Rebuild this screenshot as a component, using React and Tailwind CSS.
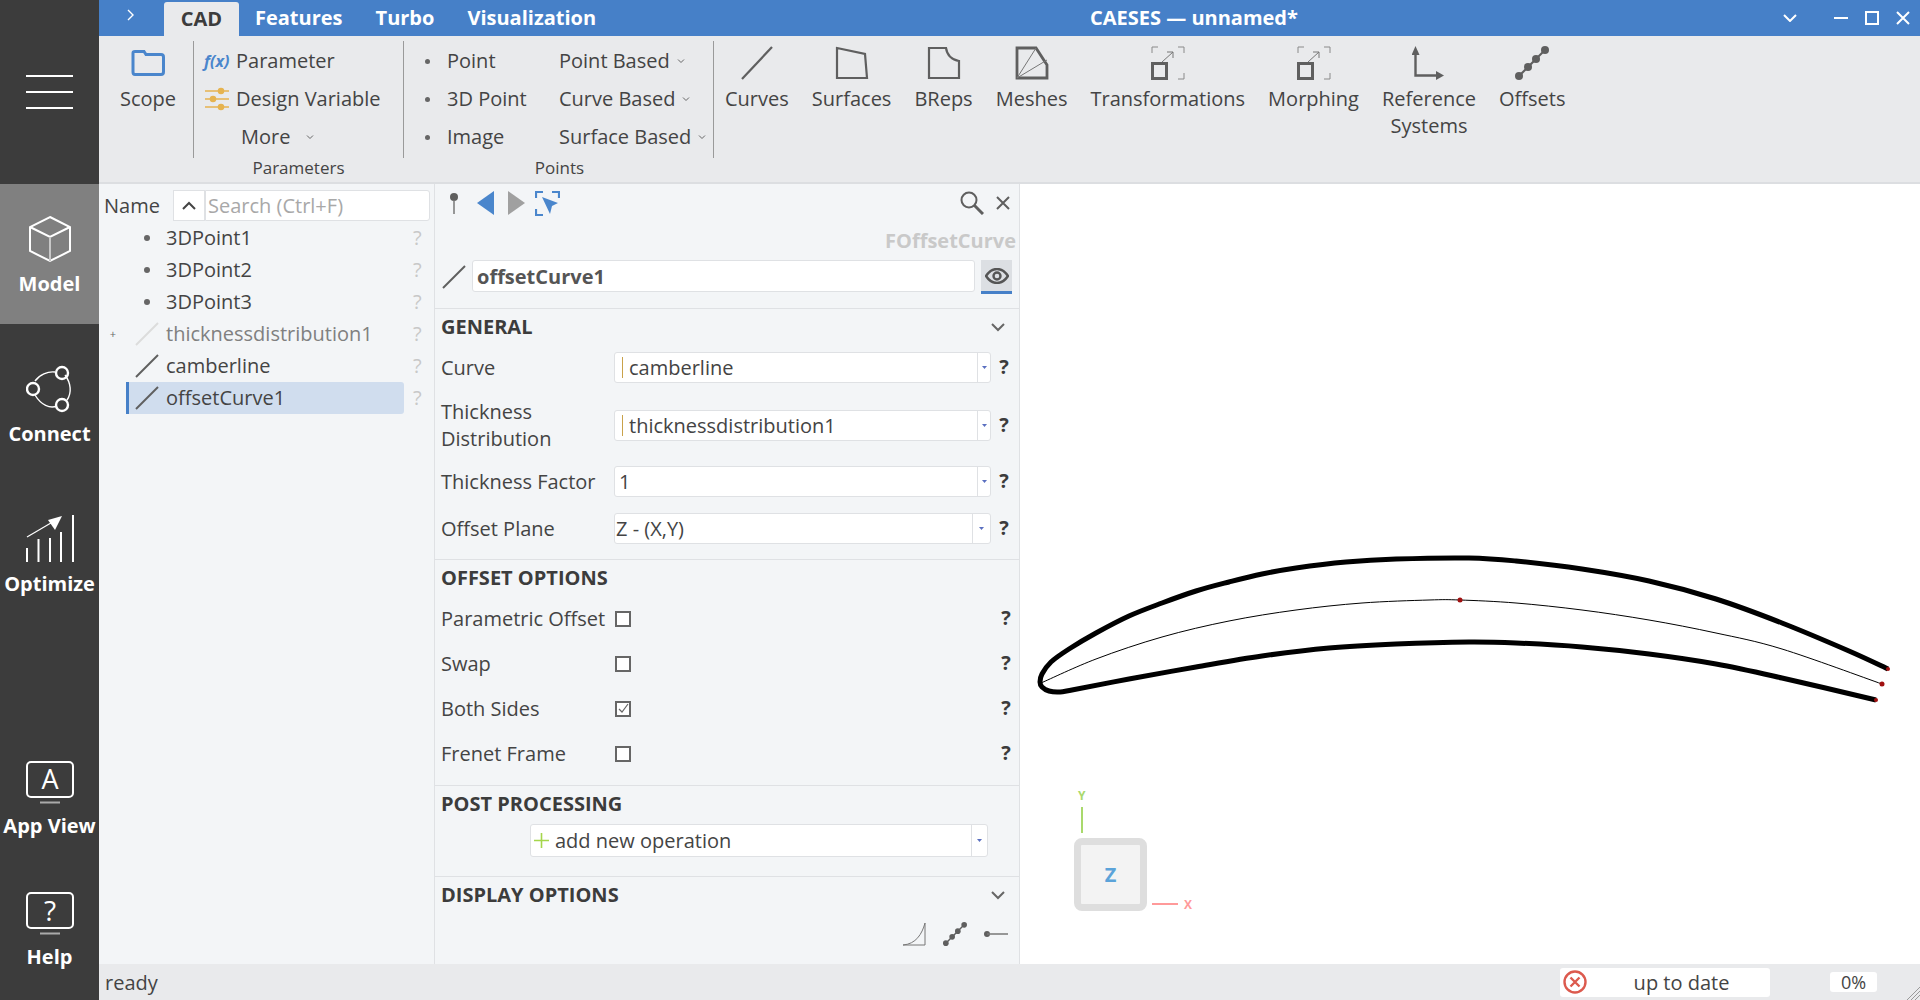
import React from "react";

const upper = [[1889,668],[1850,650],[1783,622],[1717,598],[1650,580],[1583,568],[1517,560],[1470,557],[1397,558],[1347,561],[1297,567],[1263,573],[1230,581],[1197,590],[1163,602],[1130,615],[1097,632],[1070,648],[1052,661],[1043,673],[1041,681],[1043,686],[1050,690],[1060,691],[1073,689],[1130,678],[1197,666],[1263,655],[1330,647],[1397,643],[1470,641],[1517,642],[1583,646],[1650,653],[1717,663],[1783,677],[1877,699]];
const camber = [[1042,682],[1097,658],[1163,636],[1230,620],[1297,609],[1363,602],[1430,599],[1461,599],[1517,602],[1583,609],[1650,619],[1717,632],[1783,648],[1883,683]];

// catmull-rom through the traced points
function smooth(pts) {
  let d = `M${pts[0][0]} ${pts[0][1]}`;
  for (let i = 0; i < pts.length - 1; i++) {
    const a = pts[i - 1] || pts[i];
    const b = pts[i];
    const c = pts[i + 1];
    const e = pts[i + 2] || c;
    d += ` C${b[0] + (c[0] - a[0]) / 6} ${b[1] + (c[1] - a[1]) / 6} ${c[0] - (e[0] - b[0]) / 6} ${c[1] - (e[1] - b[1]) / 6} ${c[0]} ${c[1]}`;
  }
  return d;
}

function LineIcon({ color = "#5f5f5f" }) {
  return (
    <svg width="24" height="24" viewBox="0 0 24 24">
      <line x1="1" y1="23" x2="23" y2="1" stroke={color} strokeWidth="2" />
    </svg>
  );
}

function Caret() {
  return (
    <svg width="8" height="6" viewBox="0 0 8 6" className="ml-[7px]">
      <path d="M1 1.500 L4 4.500 L7 1.500" fill="none" stroke="#666" strokeWidth="1" />
    </svg>
  );
}

function TransformIcon() {
  return (
    <svg width="34" height="34" viewBox="0 0 34 34" fill="none">
      <path d="M1 7V1H7M27 1H33V7M33 27V33H27" stroke="#8a8a8a" strokeWidth="1" />
      <rect x="1.500" y="17.500" width="14" height="15" stroke="#5f5f5f" strokeWidth="3" />
      <path d="M11 16L22 6M16 6H22V12" stroke="#777" strokeWidth="1" />
    </svg>
  );
}

function OffsetsIcon({ size = 34 }) {
  return (
    <svg width={size} height={size} viewBox="0 0 34 34" fill="none">
      <path d="M4 30L30 4" stroke="#5f5f5f" strokeWidth="2" />
      <circle cx="4" cy="30" r="4" fill="#5f5f5f" />
      <circle cx="13" cy="21" r="4" fill="#5f5f5f" />
      <circle cx="21" cy="13" r="4" fill="#5f5f5f" />
      <circle cx="30" cy="4" r="4" fill="#5f5f5f" />
    </svg>
  );
}

const bigButtons = [
  {
    label: ["Curves"],
    icon: (
      <svg width="34" height="34" viewBox="0 0 34 34">
        <line x1="2" y1="33" x2="32" y2="1" stroke="#5f5f5f" strokeWidth="2.2" />
      </svg>
    ),
  },
  {
    label: ["Surfaces"],
    icon: (
      <svg width="34" height="34" viewBox="0 0 34 34" fill="none">
        <path d="M2 2L30 8L32 32H2Z" stroke="#5f5f5f" strokeWidth="2.2" />
      </svg>
    ),
  },
  {
    label: ["BReps"],
    icon: (
      <svg width="34" height="34" viewBox="0 0 34 34" fill="none">
        <path d="M2 2H19C20 9 25 14 32 15V32H2Z" stroke="#5f5f5f" strokeWidth="2.2" />
      </svg>
    ),
  },
  {
    label: ["Meshes"],
    icon: (
      <svg width="34" height="34" viewBox="0 0 34 34" fill="none">
        <path d="M2 2H21L32 19V32H2Z" stroke="#5f5f5f" strokeWidth="2.8" />
        <path d="M2 32L21 2M2 32L32 14" stroke="#777" strokeWidth="1" />
      </svg>
    ),
  },
  { label: ["Transformations"], icon: <TransformIcon /> },
  { label: ["Morphing"], icon: <TransformIcon /> },
  {
    label: ["Reference", "Systems"],
    icon: (
      <svg width="34" height="34" viewBox="0 0 34 34" fill="#5f5f5f">
        <path d="M3.500 8V29.500H27" fill="none" stroke="#5f5f5f" strokeWidth="2.4" />
        <path d="M3.500 0L7.500 9H-0.500Z" />
        <path d="M32 29.500L24 25V34Z" />
      </svg>
    ),
  },
  { label: ["Offsets"], icon: <OffsetsIcon /> },
];

function SideItem({ label, icon, className }) {
  return (
    <div className={`flex flex-col items-center ${className}`}>
      {icon}
      <span className="text-white font-bold text-[20px] leading-[26px] whitespace-nowrap mt-[8px]">{label}</span>
    </div>
  );
}

function Sidebar() {
  return (
    <div className="w-[99px] h-full shrink-0 bg-[#3c3c3c] flex flex-col">
      <div className="h-[184px] shrink-0 flex flex-col gap-[14px] px-[26px] pt-[75px]">
        <div className="h-[2px] bg-white" />
        <div className="h-[2px] bg-white" />
        <div className="h-[2px] bg-white" />
      </div>
      <SideItem
        className="h-[140px] bg-[#808080] pt-[31px]"
        label="Model"
        icon={
          <svg width="44" height="48" viewBox="0 0 44 48" fill="none" stroke="#fff" strokeWidth="2">
            <path d="M22 2L42 12V36L22 46L2 36V12Z" />
            <path d="M2 12L22 22L42 12" />
            <path d="M22 22V46" stroke="#c8c8c8" />
          </svg>
        }
      />
      <SideItem
        className="pt-[41px]"
        label="Connect"
        icon={
          <svg width="48" height="48" viewBox="0 0 48 48" fill="none" stroke="#fff" strokeWidth="2">
            <path d="M9 16C13 10 22 6 29 7M39 10C45 18 46 28 41 35M31 41C24 44 15 40 9 30" strokeWidth="1.4" />
            <circle cx="36" cy="8" r="6" strokeWidth="2.4" />
            <circle cx="7" cy="24" r="6" strokeWidth="2.4" />
            <circle cx="36" cy="40" r="6" strokeWidth="2.4" />
          </svg>
        }
      />
      <SideItem
        className="pt-[68px]"
        label="Optimize"
        icon={
          <svg width="48" height="48" viewBox="0 0 48 48" fill="none" stroke="#fff" strokeWidth="2">
            <path d="M1 22L30 5" strokeWidth="1.2" />
            <path d="M36 1L22 5L29 15Z" fill="#fff" stroke="none" />
            <path d="M47 0V47M35 17V47M24 23V47M12.500 24V47M1 33V47" />
          </svg>
        }
      />
      <div className="flex-1" />
      <SideItem
        label="App View"
        icon={
          <svg width="48" height="44" viewBox="0 0 48 44" fill="none" stroke="#fff" strokeWidth="2">
            <rect x="1" y="1" width="46" height="35" rx="4" />
            <path d="M14 41.500H34" stroke="#aaa" strokeWidth="2" />
            <text x="24" y="28" textAnchor="middle" fontSize="27" fill="#fff" stroke="none">A</text>
          </svg>
        }
      />
      <SideItem
        className="mt-[53px] pb-[30px]"
        label="Help"
        icon={
          <svg width="48" height="44" viewBox="0 0 48 44" fill="none" stroke="#fff" strokeWidth="2">
            <rect x="1" y="1" width="46" height="35" rx="4" />
            <path d="M14 41.500H34" stroke="#aaa" strokeWidth="2" />
            <text x="24" y="29" textAnchor="middle" fontSize="28" fill="#fff" stroke="none">?</text>
          </svg>
        }
      />
    </div>
  );
}

function TopBar() {
  return (
    <div className="h-9 shrink-0 bg-[#4680c8] relative flex items-end text-white font-bold text-[20px]">
      <svg width="8" height="12" viewBox="0 0 8 12" fill="none" className="ml-[28px] mb-[15px] mr-[29px]">
        <path d="M1 1L6 6L1 11" stroke="#fff" strokeWidth="1.4" />
      </svg>
      <div className="h-[34px] w-[75px] bg-[#e9eaec] rounded-t-[3px] text-[#3c3c3c] flex items-center justify-center">CAD</div>
      <div className="h-full flex items-center ml-[16px] gap-[33px]">
        <span>Features</span>
        <span>Turbo</span>
        <span>Visualization</span>
      </div>
      <div className="h-full flex items-center ml-[494px]">CAESES — unnamed*</div>
      <div className="flex-1" />
      <div className="h-full flex items-center pr-[10px]">
        <svg width="14" height="8" viewBox="0 0 14 8" fill="none" className="mr-[37px]">
          <path d="M1 1L7 7L13 1" stroke="#fff" strokeWidth="2" />
        </svg>
        <div className="w-[14px] h-[2px] bg-white mr-[17px]" />
        <div className="w-[14px] h-[14px] border-2 border-white mr-[17px]" />
        <svg width="14" height="14" viewBox="0 0 14 14" fill="none">
          <path d="M1 1L13 13M13 1L1 13" stroke="#fff" strokeWidth="2" />
        </svg>
      </div>
    </div>
  );
}

function Divider() {
  return <div className="w-px h-[117px] mt-[5px] bg-[#9a9a9a] shrink-0" />;
}

function Dot() {
  return <div className="w-[5px] h-[5px] rounded-full bg-[#666] ml-[21px] mr-[17px] shrink-0" />;
}

function Ribbon() {
  return (
    <div className="h-[148px] shrink-0 bg-[#e9eaec] border-b-2 border-[#dcdee1] flex text-[20px] text-[#444]">
      <div className="w-[94px] shrink-0 flex flex-col items-center pl-[4px] pt-[14px]">
        <svg width="34" height="26" viewBox="0 0 34 26" fill="none">
          <path d="M2 3C2 2 3 1.500 4 1.500H13L15 4.500H30C31.500 4.500 32.500 5.500 32.500 7V22C32.500 23.500 31.500 24.500 30 24.500H4C3 24.500 2 23.500 2 22Z" stroke="#4a86cc" strokeWidth="3" />
        </svg>
        <span className="mt-[9px] leading-[27px]">Scope</span>
      </div>
      <Divider />
      <div className="w-[209px] shrink-0 flex flex-col pt-[6px]">
        <div className="h-[38px] flex items-center pl-[10px] whitespace-nowrap">
          <span className="w-[32px] italic font-bold text-[#4a86cc] text-[16px]">f(x)</span>
          Parameter
        </div>
        <div className="h-[38px] flex items-center pl-[10px] whitespace-nowrap">
          <svg width="26" height="24" viewBox="0 0 26 24" className="mr-[6px]" fill="#e6b34f" stroke="#e6b34f" strokeWidth="1.500">
            <path d="M1 4H25M1 12H25M1 20H25" />
            <circle cx="17" cy="4" r="2.500" />
            <circle cx="9" cy="12" r="2.500" />
            <circle cx="17" cy="20" r="2.500" />
          </svg>
          Design Variable
        </div>
        <div className="h-[38px] flex items-center pl-[47px]">
          More
          <span className="ml-[9px]"><Caret /></span>
        </div>
        <div className="text-center text-[17px] leading-[24px]">Parameters</div>
      </div>
      <Divider />
      <div className="w-[309px] shrink-0 flex flex-col pt-[6px]">
        <div className="flex">
          <div className="w-[155px] shrink-0">
            {["Point", "3D Point", "Image"].map((t) => (
              <div key={t} className="h-[38px] flex items-center">
                <Dot />
                {t}
              </div>
            ))}
          </div>
          <div className="whitespace-nowrap">
            {["Point Based", "Curve Based", "Surface Based"].map((t) => (
              <div key={t} className="h-[38px] flex items-center">
                {t}
                <Caret />
              </div>
            ))}
          </div>
        </div>
        <div className="text-center text-[17px] leading-[24px] pl-[2px]">Points</div>
      </div>
      <Divider />
      <div className="flex gap-[23px] pl-[11px] pt-[10px]">
        {bigButtons.map((b) => (
          <div key={b.label[0]} className="flex flex-col items-center leading-[27px] whitespace-nowrap">
            {b.icon}
            <div className="mt-[5px] text-center">
              {b.label.map((l) => (
                <div key={l}>{l}</div>
              ))}
            </div>
          </div>
        ))}
      </div>
    </div>
  );
}

const treeRows = [
  { name: "3DPoint1", kind: "dot" },
  { name: "3DPoint2", kind: "dot" },
  { name: "3DPoint3", kind: "dot" },
  { name: "thicknessdistribution1", kind: "line", muted: true },
  { name: "camberline", kind: "line" },
  { name: "offsetCurve1", kind: "line", selected: true },
];

function TreePanel() {
  return (
    <div className="w-[335px] shrink-0 bg-[#f3f5f7] flex flex-col text-[20px] text-[#444]">
      <div className="h-[38px] shrink-0 flex items-start pt-[6px]">
        <span className="w-[74px] pl-[5px] leading-[31px]">Name</span>
        <div className="w-[32px] h-[31px] bg-white border border-[#dfe1e4] flex items-center justify-center">
          <svg width="14" height="9" viewBox="0 0 14 9" fill="none">
            <path d="M1 8L7 2L13 8" stroke="#444" strokeWidth="2" />
          </svg>
        </div>
        <div className="w-[225px] h-[31px] bg-white border border-[#dfe1e4] rounded-r-[3px] pl-[2px] text-[#a8a8a8] leading-[29px]">Search (Ctrl+F)</div>
      </div>
      {treeRows.map((r) => (
        <div key={r.name} className="h-[32px] shrink-0 flex items-center">
          <span className="w-[27px] shrink-0 text-right text-[11px] text-[#666] pr-[10px]">{r.muted ? "+" : ""}</span>
          <div className={`w-[278px] shrink-0 h-full flex items-center rounded-r-[3px] ${r.selected ? "bg-[#d0ddee] border-l-[3px] border-[#4680c8]" : "border-l-[3px] border-transparent"}`}>
            <div className="w-[37px] shrink-0 flex justify-center pr-[3px] pl-[2px]">
              {r.kind === "dot" ? <div className="w-[6px] h-[6px] rounded-full bg-[#666]" /> : <LineIcon color={r.muted ? "#dcdcdc" : "#5f5f5f"} />}
            </div>
            <span className={r.muted ? "text-[#808080]" : ""}>{r.name}</span>
          </div>
          <span className="ml-[9px] text-[#c8c8c8]">?</span>
        </div>
      ))}
    </div>
  );
}

function Section({ title, chevron, className, children }) {
  return (
    <div className={`border-t border-[#dfe1e4] ${className}`}>
      <div className="h-[36px] flex items-center justify-between pl-[6px] pr-[14px]">
        <span className="font-bold text-[#3c3c3c]">{title}</span>
        {chevron && (
          <svg width="14" height="9" viewBox="0 0 14 9" fill="none">
            <path d="M1 1L7 7L13 1" stroke="#666" strokeWidth="2" />
          </svg>
        )}
      </div>
      {children}
    </div>
  );
}

function Help() {
  return <span className="w-[26px] shrink-0 text-center font-bold text-[#3c3c3c] -mt-[1px]">?</span>;
}

function Combo({ value, bar, wide, pad = "" }) {
  return (
    <div className="h-[31px] w-[377px] shrink-0 bg-white border border-[#dfe1e4] rounded-[3px] flex items-center">
      {bar && <div className="w-px h-[21px] bg-[#c9a24a] ml-[7px] mr-[6px]" />}
      <span className={`flex-1 leading-[29px] ${pad}`}>{value}</span>
      <div className={`${wide ? "w-[18px]" : "w-[13px]"} h-full border-l border-[#dfe1e4] flex items-center justify-center`}>
        <svg width="5" height="3" viewBox="0 0 5 3"><path d="M0 0H5L2.500 3Z" fill="#5a6fc0" /></svg>
      </div>
    </div>
  );
}

function Row({ label, className, children }) {
  return (
    <div className={`flex items-center pl-[6px] ${className}`}>
      <span className="w-[173px] shrink-0 leading-[27px]">{label}</span>
      {children}
    </div>
  );
}

function CheckRow({ label, checked }) {
  return (
    <div className="h-[45px] flex items-center pl-[6px]">
      <span className="w-[174px] shrink-0 whitespace-nowrap">{label}</span>
      <div className="w-[16px] h-[16px] border-2 border-[#666] bg-white flex items-center justify-center">
        {checked && (
          <svg width="12" height="12" viewBox="0 0 12 12" fill="none">
            <path d="M2 6L5 9L11 1" stroke="#666" strokeWidth="1.2" />
          </svg>
        )}
      </div>
      <div className="flex-1" />
      <Help />
    </div>
  );
}

function PropsPanel() {
  return (
    <div className="w-[586px] shrink-0 bg-[#f3f5f7] border-x border-[#dfe1e4] flex flex-col text-[20px] text-[#444] overflow-hidden">
      <div className="h-[38px] shrink-0 flex items-center pl-[14px] pr-[8px]">
        <svg width="10" height="22" viewBox="0 0 10 22" className="mr-[18px]">
          <circle cx="5" cy="5" r="4" fill="#5f5f5f" />
          <path d="M5 8V22" stroke="#777" strokeWidth="1.500" />
        </svg>
        <svg width="18" height="24" viewBox="0 0 18 24" className="mr-[12px]"><path d="M17 0V24L0 12Z" fill="#4a86cc" /></svg>
        <svg width="18" height="24" viewBox="0 0 18 24" className="mr-[10px]"><path d="M1 0V24L18 12Z" fill="#a0a0a0" /></svg>
        <svg width="25" height="25" viewBox="0 0 25 25" fill="none">
          <path d="M1 7V1H8M17 1H24V7M1 18V24H8" stroke="#4a86cc" strokeWidth="2.2" />
          <path d="M7 6L23 12L17 15L15 23Z" fill="#4a86cc" />
        </svg>
        <div className="flex-1" />
        <svg width="24" height="24" viewBox="0 0 24 24" fill="none" stroke="#5f5f5f" className="mr-[12px]">
          <circle cx="9" cy="9" r="7.500" strokeWidth="2" />
          <path d="M14 14L23 23" strokeWidth="3" />
        </svg>
        <svg width="14" height="14" viewBox="0 0 14 14" fill="none" className="mr-[1px]">
          <path d="M1 1L13 13M13 1L1 13" stroke="#5f5f5f" strokeWidth="2" />
        </svg>
      </div>
      <div className="h-[38px] shrink-0 flex items-center justify-end pr-[3px] font-bold text-[#c9c9c9]">FOffsetCurve</div>
      <div className="h-[48px] shrink-0 flex items-start pl-[7px]">
        <div className="mt-[5px] mr-[6px]"><LineIcon /></div>
        <div className="w-[503px] h-[32px] bg-white border border-[#dfe1e4] rounded-[3px] pl-[4px] font-bold text-[#555] leading-[31px]">offsetCurve1</div>
        <div className="ml-[6px] w-[31px] h-[34px] bg-[#dcdfe3] border-b-[3px] border-[#4680c8] flex items-center justify-center">
          <svg width="24" height="16" viewBox="0 0 24 16" fill="none" stroke="#555">
            <path d="M1 8C5 2 9 1 12 1C15 1 19 2 23 8C19 14 15 15 12 15C9 15 5 14 1 8Z" strokeWidth="2.400" />
            <circle cx="12" cy="8" r="3.500" strokeWidth="2.400" />
          </svg>
        </div>
      </div>
      <Section title="GENERAL" chevron className="h-[251px]">
        <Row label="Curve" className="h-[45px]">
          <Combo value="camberline" bar />
          <Help />
        </Row>
        <Row label={<>Thickness<br />Distribution</>} className="h-[70px]">
          <Combo value="thicknessdistribution1" bar />
          <Help />
        </Row>
        <Row label="Thickness Factor" className="h-[43px]">
          <Combo value="1" pad="pl-[4px]" />
          <Help />
        </Row>
        <Row label="Offset Plane" className="h-[50px]">
          <Combo value="Z - (X,Y)" wide pad="pl-[1px]" />
          <Help />
        </Row>
      </Section>
      <Section title="OFFSET OPTIONS" className="h-[226px]">
        <CheckRow label="Parametric Offset" />
        <CheckRow label="Swap" />
        <CheckRow label="Both Sides" checked />
        <CheckRow label="Frenet Frame" />
      </Section>
      <Section title="POST PROCESSING" className="h-[91px]">
        <div className="pl-[95px] pt-[2px]">
          <div className="w-[458px] h-[33px] bg-white border border-[#dfe1e4] rounded-[3px] flex items-center">
            <svg width="15" height="15" viewBox="0 0 15 15" className="ml-[3px] mr-[6px]">
              <path d="M7.500 0V15M0 7.500H15" stroke="#a5d64c" strokeWidth="1.600" />
            </svg>
            <span className="flex-1">add new operation</span>
            <div className="w-[16px] h-full border-l border-[#dfe1e4] flex items-center justify-center">
              <svg width="5" height="3" viewBox="0 0 5 3"><path d="M0 0H5L2.500 3Z" fill="#5a6fc0" /></svg>
            </div>
          </div>
        </div>
      </Section>
      <Section title="DISPLAY OPTIONS" chevron className="flex-1">
        <div className="flex justify-end gap-[17px] pr-[11px] pt-[9px]">
          <svg width="24" height="24" viewBox="0 0 24 24" fill="none" stroke="#777" strokeWidth="1">
            <path d="M1 23H23L23 1C20 12 14 22 1 23Z" />
          </svg>
          <OffsetsIcon size={24} />
          <svg width="24" height="24" viewBox="0 0 24 24" fill="none">
            <circle cx="3" cy="12" r="3" fill="#5f5f5f" />
            <path d="M3 12H24" stroke="#777" strokeWidth="1.500" />
          </svg>
        </div>
      </Section>
    </div>
  );
}

function Viewer() {
  return (
    <div className="flex-1 relative bg-white overflow-hidden">
      {/* viewBox is in page px, so the traced points can stay as measured */}
      <svg width="899" height="780" viewBox="1021 183 899 780" fill="none" className="absolute inset-0">
        <path d={smooth(upper)} stroke="#000" strokeWidth="5" />
        <path d={smooth(camber)} stroke="#000" strokeWidth="1" />
        <circle cx="1461" cy="599" r="2.500" fill="#a01010" />
        <circle cx="1883" cy="683" r="2.500" fill="#a01010" />
        <circle cx="1889" cy="668" r="2" fill="#a01010" />
        <circle cx="1877" cy="699" r="2" fill="#a01010" />
      </svg>
      <div className="absolute left-[54px] top-[654px] w-[73px] h-[73px] rounded-[8px] bg-[#f3f3f3] border-[7px] border-[#dedede] flex items-center justify-center text-[20px] font-bold text-[#5ba3d9]">Z</div>
      <div className="absolute left-[61px] top-[623px] w-[2px] h-[26px] bg-[#a9d96c]" />
      <div className="absolute left-[58px] top-[603px] text-[12px] font-bold text-[#a9d96c]">Y</div>
      <div className="absolute left-[132px] top-[719px] w-[26px] h-[2px] bg-[#ff9a9a]" />
      <div className="absolute left-[164px] top-[712px] text-[12px] font-bold text-[#ff9a9a]">X</div>
    </div>
  );
}

function StatusBar() {
  return (
    <div className="h-9 shrink-0 bg-[#e9eaec] flex items-center text-[20px] text-[#444] relative">
      <span className="pl-[6px] pt-[1px]">ready</span>
      <div className="flex-1" />
      <div className="w-[210px] h-[29px] bg-white rounded-[3px] flex items-center">
        <svg width="24" height="24" viewBox="0 0 24 24" fill="none" stroke="#dc5a4e" strokeWidth="2.400" className="ml-[3px]">
          <circle cx="12" cy="12" r="10.500" />
          <path d="M7.500 7.500L16.500 16.500M16.500 7.500L7.500 16.500" />
        </svg>
        <span className="flex-1 text-center pl-[6px] pt-[1px]">up to date</span>
      </div>
      <div className="w-[47px] h-[20px] ml-[60px] mr-[43px] bg-white rounded-[3px] flex items-center justify-center text-[18px]">0%</div>
      <svg width="13" height="13" viewBox="0 0 13 13" className="absolute right-0 bottom-0" stroke="#999" strokeWidth="1">
        <path d="M0 13L13 0M4 13L13 4M8 13L13 8" />
      </svg>
    </div>
  );
}

export default function App() {
  return (
    <div className="w-[1920px] h-[1000px] flex overflow-hidden font-['Open_Sans',sans-serif]">
      <Sidebar />
      <div className="flex-1 flex flex-col min-w-0">
        <TopBar />
        <Ribbon />
        <div className="flex-1 flex min-h-0">
          <TreePanel />
          <PropsPanel />
          <Viewer />
        </div>
        <StatusBar />
      </div>
    </div>
  );
}
